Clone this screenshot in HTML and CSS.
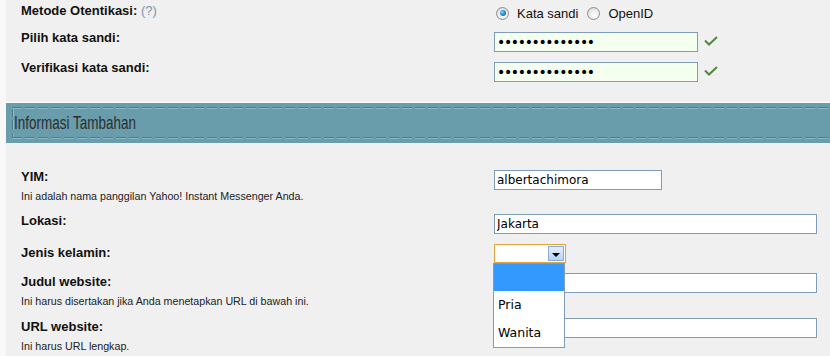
FILE: index.html
```html
<!DOCTYPE html>
<html lang="id">
<head>
<meta charset="utf-8">
<title>Informasi Tambahan</title>
<link rel="stylesheet" href="styles.css">
</head>
<body>
<div class="page">
  <div class="section">
    <div class="row row-first">
      <div class="label">Metode Otentikasi: <span class="help">(?)</span></div>
      <div class="control radios">
        <span class="radio radio-on"></span><span class="rlabel">Kata sandi</span>
        <span class="radio"></span><span class="rlabel">OpenID</span>
      </div>
    </div>
    <div class="row">
      <div class="label label-hi">Pilih kata sandi:</div>
      <div class="control">
        <input class="field field-pw" type="password" value="abcdefghijklmn" readonly>
        <svg class="check" viewBox="0 0 14 10" width="14" height="10"><polyline points="1,4.5 5,8.5 13,1" fill="none" stroke="#4f8b3f" stroke-width="2"/></svg>
      </div>
    </div>
    <div class="row">
      <div class="label label-hi">Verifikasi kata sandi:</div>
      <div class="control">
        <input class="field field-pw" type="password" value="abcdefghijklmn" readonly>
        <svg class="check" viewBox="0 0 14 10" width="14" height="10"><polyline points="1,4.5 5,8.5 13,1" fill="none" stroke="#4f8b3f" stroke-width="2"/></svg>
      </div>
    </div>
  </div>

  <div class="band"><span class="band-title">Informasi Tambahan</span></div>

  <div class="section section-extra">
    <div class="row row-tall">
      <div class="label">YIM:<span class="desc">Ini adalah nama panggilan Yahoo! Instant Messenger Anda.</span></div>
      <div class="control"><input class="field field-sm" type="text" value="albertachimora" readonly></div>
    </div>
    <div class="row">
      <div class="label">Lokasi:</div>
      <div class="control"><input class="field field-lg" type="text" value="Jakarta" readonly></div>
    </div>
    <div class="row row-jenis">
      <div class="label label-low">Jenis kelamin:</div>
      <div class="control">
        <div class="select">
          <span class="select-btn"><span class="arrow"></span></span>
          <div class="options">
            <div class="opt opt-sel"></div>
            <div class="opt">Pria</div>
            <div class="opt">Wanita</div>
          </div>
        </div>
      </div>
    </div>
    <div class="row row-tall2">
      <div class="label label-low">Judul website:<span class="desc">Ini harus disertakan jika Anda menetapkan URL di bawah ini.</span></div>
      <div class="control"><input class="field field-lg" type="text" value="" readonly></div>
    </div>
    <div class="row row-tall">
      <div class="label label-low">URL website:<span class="desc">Ini harus URL lengkap.</span></div>
      <div class="control"><input class="field field-lg" type="text" value="" readonly></div>
    </div>
  </div>
</div>
</body>
</html>
```
FILE: styles.css
```css
body {
  margin: 0;
  background: #f8f8f8;
  font-family: "Liberation Sans", Arial, sans-serif;
}

.page {
  margin-left: 6px;
  background: #f0f0f0;
  height: 356px;
  overflow: hidden;
}

.row {
  display: grid;
  grid-template-columns: 488px 1fr;
  height: 30px;
}
.row-first { height: 28px; }
.row-tall { height: 44px; }
.row-tall2 { height: 45px; }
.row-jenis { height: 29px; }

.label {
  padding: 3px 0 0 15px;
  font-size: 13px;
  line-height: 16px;
  font-weight: bold;
  color: #111;
}
.label-hi { padding-top: 2px; }
.label-low { padding-top: 5px; }

.help {
  font-weight: normal;
  color: #7d93ab;
}

.desc {
  display: block;
  margin-top: 4px;
  font-size: 10.7px;
  line-height: 14px;
  font-weight: normal;
  color: #222;
}

.control {
  display: flex;
  align-items: flex-start;
  padding-top: 4px;
}

.radios {
  padding-top: 5px;
  align-items: center;
  height: 16px;
  font-size: 13px;
  color: #111;
}

.radio {
  box-sizing: border-box;
  width: 13px;
  height: 13px;
  margin-left: 2px;
  border: 1px solid #8f8f8f;
  border-radius: 50%;
  background: radial-gradient(circle at 60% 65%, #ffffff 0, #f0f0f0 40%, #cfcfcf 100%);
  display: flex;
  align-items: center;
  justify-content: center;
}
.radio-on::after {
  content: "";
  width: 6px;
  height: 6px;
  border-radius: 50%;
  background: radial-gradient(circle at 35% 35%, #8fd4ff 0, #2a8fd0 45%, #0b4f86 100%);
}
.rlabel {
  margin-left: 8px;
  margin-right: 7px;
}

.field {
  box-sizing: border-box;
  height: 20px;
  margin: 0;
  padding: 0 2px;
  border: 1px solid #7f9db9;
  background: #fff;
  font-family: "DejaVu Sans", sans-serif;
  font-size: 12px;
  color: #000;
  outline: none;
}
.field-pw {
  width: 204px;
  background: #f4fff0;
  font-size: 14px;
  letter-spacing: -1.35px;
}
.field-sm { width: 168px; }
.field-lg { width: 323px; }

.check {
  margin: 4px 0 0 6px;
}

.band {
  margin-top: 14px;
  height: 40px;
  border-top: 1px solid #ffffff;
  padding-left: 8px;
  line-height: 40px;
  font-size: 19px;
  background:
    repeating-linear-gradient(90deg, #4b7d8a 0 10px, transparent 10px 13px) 6px 4px / 100% 1px no-repeat,
    repeating-linear-gradient(90deg, #8ab9c5 0 10px, transparent 10px 13px) 6px 5px / 100% 1px no-repeat,
    repeating-linear-gradient(90deg, #4b7d8a 0 10px, transparent 10px 13px) 6px 34px / 100% 1px no-repeat,
    repeating-linear-gradient(90deg, #8ab9c5 0 10px, transparent 10px 13px) 6px 35px / 100% 1px no-repeat,
    repeating-linear-gradient(180deg, #4b7d8a 0 10px, transparent 10px 13px) 6px 4px / 1px 31px no-repeat,
    repeating-linear-gradient(180deg, #8ab9c5 0 10px, transparent 10px 13px) 7px 4px / 1px 31px no-repeat,
    #699dac;
}
.band-title {
  display: inline-block;
  line-height: 40px;
  color: #2e2e2e;
  transform: scaleX(0.71);
  transform-origin: left center;
  white-space: nowrap;
}

.section-extra {
  padding-top: 23px;
}

.select {
  position: relative;
  box-sizing: border-box;
  width: 72px;
  height: 19px;
  border: 1px solid #e2a23c;
  background: #fff;
  display: flex;
  justify-content: flex-end;
}
.select-btn {
  box-sizing: border-box;
  width: 16px;
  height: 15px;
  margin: 1px 1px 0 0;
  border: 1px solid #86acd6;
  background: linear-gradient(#e4effb, #b6d4f4);
  display: flex;
  align-items: center;
  justify-content: center;
}
.arrow {
  width: 0;
  height: 0;
  margin-top: 2px;
  border-left: 4px solid transparent;
  border-right: 4px solid transparent;
  border-top: 4px solid #000;
}

.options {
  position: absolute;
  top: 18px;
  left: -2px;
  z-index: 2;
  box-sizing: border-box;
  width: 72px;
  border: 1px solid #7f9db9;
  background: #fff;
  font-family: "DejaVu Sans", sans-serif;
  font-size: 12.5px;
  color: #000;
}
.opt {
  height: 28px;
  line-height: 28px;
  padding-left: 4px;
}
.opt-sel {
  height: 27px;
  background: #3399ff;
}
```
